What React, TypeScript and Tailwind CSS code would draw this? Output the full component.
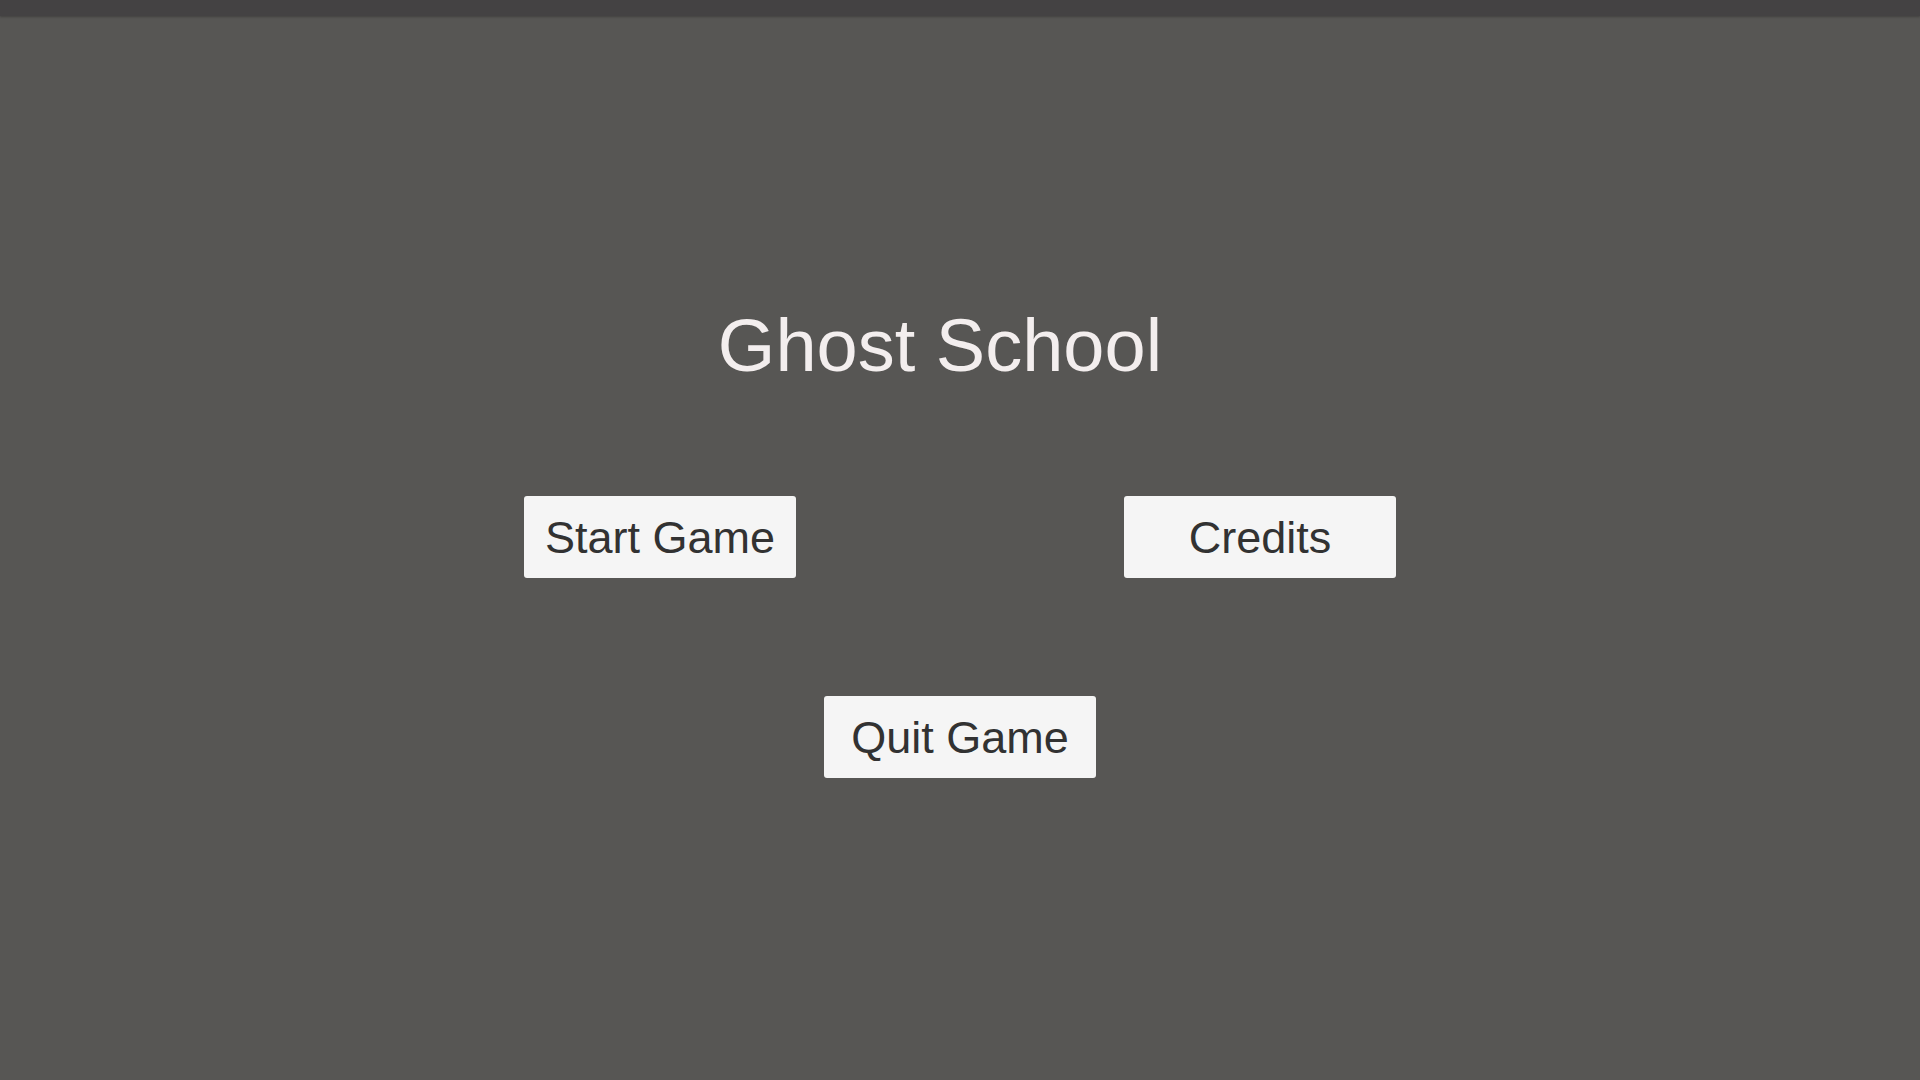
import React from "react"

const buttonClass =
  "w-[272px] h-[82px] rounded-[3px] bg-[#f5f5f5] text-[#323232] text-[45px] leading-none flex items-center justify-center"

function MenuButton({ label }: { label: string }) {
  return (
    <button type="button" className={buttonClass}>
      {label}
    </button>
  )
}

export default function App() {
  return (
    <div
      className="w-[1920px] h-[1080px] flex flex-col bg-[#575654] overflow-hidden"
      style={{ fontFamily: '"Liberation Sans", Arial, sans-serif' }}
    >
      {/* window title strip */}
      <div className="h-[16px] shrink-0 bg-[#444243] shadow-[0_1px_2px_rgba(0,0,0,0.25)]" />

      <div className="w-[872px] ml-[524px] flex flex-col">
        <div className="mt-[293px] flex justify-center pr-[40px]">
          <h1 className="text-[74px] leading-[74px] text-[#f3eeee] font-normal">Ghost School</h1>
        </div>

        <div className="mt-[113px] flex justify-between">
          <MenuButton label="Start Game" />
          <MenuButton label="Credits" />
        </div>

        <div className="mt-[118px] flex justify-center">
          <MenuButton label="Quit Game" />
        </div>
      </div>
    </div>
  )
}
